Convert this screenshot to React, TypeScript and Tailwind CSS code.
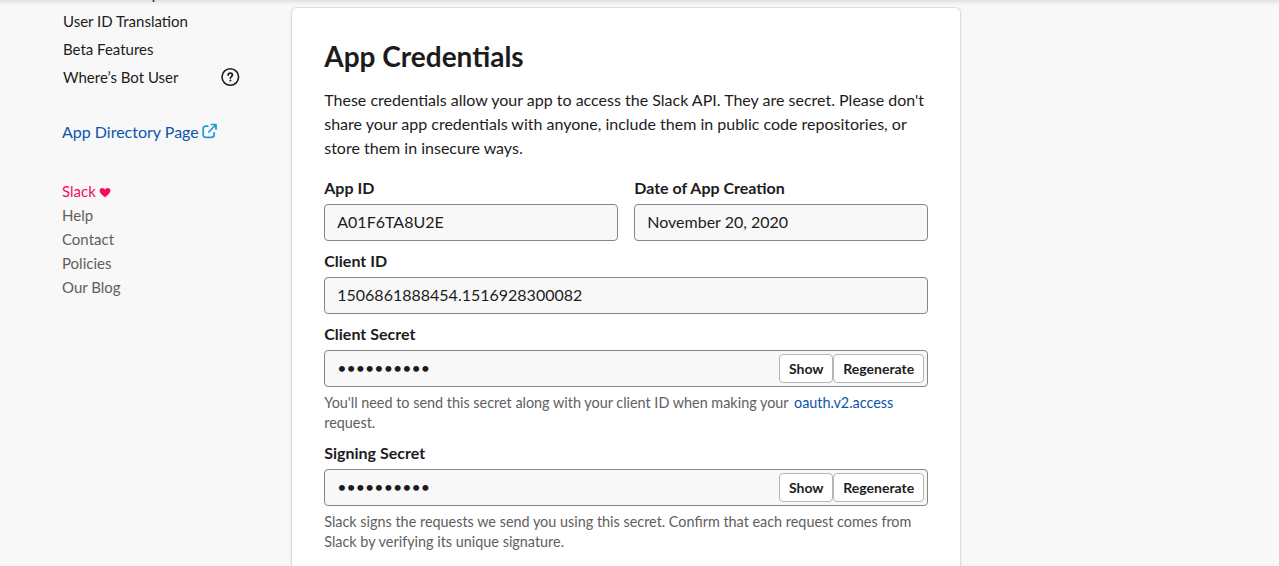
import type { ReactNode } from "react";

const navItems = ["Event Subscriptions", "User ID Translation", "Beta Features"];
const footerLinks = ["Help", "Contact", "Policies", "Our Blog"];

function HelpIcon() {
  return (
    <svg width="20" height="20" viewBox="0 0 20 20" fill="none" stroke="#1d1c1d" strokeLinecap="round">
      <circle cx="10.3" cy="10" r="8.3" strokeWidth="1.6" />
      <path d="M8.200 8.100c0-1.200.9-1.900 2.100-1.900s2.100.7 2.100 1.900c0 1.500-2 1.500-2 3" strokeWidth="1.7" />
      <circle cx="10.4" cy="13.6" r="1" fill="#1d1c1d" stroke="none" />
    </svg>
  );
}

function ExternalIcon() {
  return (
    <svg width="16" height="16" viewBox="0 0 16 16" fill="none" stroke="#1a9bd7" strokeWidth="1.7" strokeLinecap="round" strokeLinejoin="round">
      <path d="M5.800 3.200H3.400A2.200 2.200 0 0 0 1.200 5.400v6.700a2.200 2.200 0 0 0 2.200 2.200h6.500a2.200 2.200 0 0 0 2.200-2.200V9.800" />
      <path d="M6.800 9 13.600 2M9.400 1.500h4.600v4.600" />
    </svg>
  );
}

function HeartIcon() {
  return (
    <svg width="12" height="11" viewBox="0 0 12 11" fill="#f70b5b">
      <path d="M6 10.2C4.400 9.200.6 6.500.6 3.600.6 1.900 1.800 1 3.100 1c1.300 0 2.300.8 2.900 1.800C6.600 1.800 7.600 1 8.900 1c1.300 0 2.500.9 2.500 2.600 0 2.900-3.800 5.600-5.400 6.600Z" />
    </svg>
  );
}

function Sidebar() {
  return (
    <aside className="w-[291px] shrink-0 pl-[62px]">
      <nav className="-mt-[21px] pl-px text-[15px] leading-7 text-[#1d1c1d]">
        {navItems.map((item) => (
          <div key={item}>{item}</div>
        ))}
        <div className="flex w-[177px] items-center justify-between">
          <span>Where’s Bot User</span>
          <HelpIcon />
        </div>
      </nav>
      <a className="mt-[29px] flex items-center gap-[3px] text-base leading-6 text-[#0b55ad]">
        App Directory Page
        <span className="-mt-0.5">
          <ExternalIcon />
        </span>
      </a>
      <div className="mt-[35px] text-[15px] leading-6 text-[#616061]">
        <div className="flex items-center gap-[3px] text-[#f70b5b]">
          Slack
          <span className="pt-0.5">
            <HeartIcon />
          </span>
        </div>
        {footerLinks.map((link) => (
          <div key={link}>{link}</div>
        ))}
      </div>
    </aside>
  );
}

function Field({ label, value, secret, children }: { label: string; value: string; secret?: boolean; children?: ReactNode }) {
  return (
    <div className="min-w-0 flex-1">
      <div className="text-base leading-6 font-bold">{label}</div>
      <div className="mt-1 flex h-[37px] items-center justify-between rounded-[4px] border border-[#868686] bg-[#f8f8f8] pr-[3px] pl-3">
        <span className="pb-0.5 text-base leading-6">{value}</span>
        {secret && (
          <div className="flex">
            <SmallButton width="w-[54px]">Show</SmallButton>
            <SmallButton width="w-[91px]">Regenerate</SmallButton>
          </div>
        )}
      </div>
      {children && <p className="mt-1.5 text-[14.4px] leading-5 whitespace-nowrap text-[#616061]">{children}</p>}
    </div>
  );
}

function SmallButton({ width, children }: { width: string; children: ReactNode }) {
  return (
    <button className={`${width} h-[29px] rounded-[4px] border border-[#b5b5b5] bg-white text-sm font-bold`}>
      {children}
    </button>
  );
}

export default function App() {
  return (
    <div className="relative flex h-[566px] overflow-hidden bg-[#f8f8f8] font-['Lato',sans-serif] text-[#1d1c1d]">
      <Sidebar />
      <main className="mt-[7px] h-[600px] w-[670px] shrink-0 rounded-md border border-[#dddddd] bg-white pt-[30px] pr-[31.75px] pl-[32.25px] shadow-[0_1px_3px_rgba(0,0,0,0.08)]">
        <h1 className="text-[28px] leading-9 font-bold">App Credentials</h1>
        <p className="mt-3.5 text-base leading-6">
          These credentials allow your app to access the Slack API. They are secret. Please don't
          <br />
          share your app credentials with anyone, include them in public code repositories, or
          <br />
          store them in insecure ways.
        </p>
        <div className="mt-4 flex flex-col gap-2">
          <div className="flex gap-4">
            <Field label="App ID" value="A01F6TA8U2E" />
            <Field label="Date of App Creation" value="November 20, 2020" />
          </div>
          <Field label="Client ID" value="1506861888454.1516928300082" />
          <Field label="Client Secret" value="••••••••••" secret>
            You'll need to send this secret along with your client ID when making your{" "}
            <a className="pl-0.5 text-[#0b55ad]">oauth.v2.access</a>
            <br />
            request.
          </Field>
          <Field label="Signing Secret" value="••••••••••" secret>
            Slack signs the requests we send you using this secret. Confirm that each request comes from
            <br />
            Slack by verifying its unique signature.
          </Field>
        </div>
      </main>
      <div className="absolute inset-x-0 -top-px h-px shadow-[0_0_5px_1px_rgba(0,0,0,0.2)]" />
    </div>
  );
}
